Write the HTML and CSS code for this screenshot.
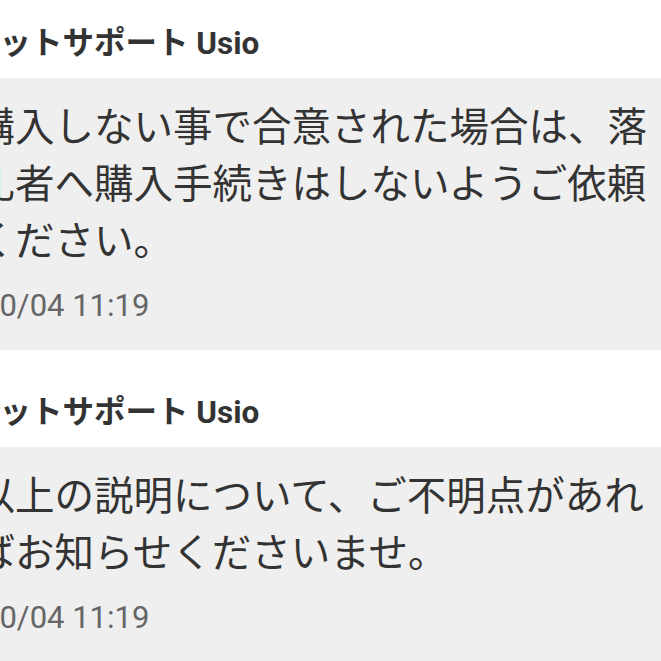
FILE: index.html
```html
<!DOCTYPE html>
<html lang="ja">
<head>
    <meta charset="UTF-8">
    <meta name="viewport" content="width=device-width, initial-scale=1.0">
    <title>ネットサポート Usio</title>
    <link rel="stylesheet" href="styles.css">
</head>
<body>
    <div class="chat">
        <div class="message">
            <div class="sender">ネットサポート Usio</div>
            <div class="bubble">
                <p class="text">購入しない事で合意された場合は、落札者へ購入手続きはしないようご依頼ください。</p>
                <div class="time">10/04 11:19</div>
            </div>
        </div>

        <div class="message">
            <div class="sender">ネットサポート Usio</div>
            <div class="bubble">
                <p class="text">以上の説明について、ご不明点があればお知らせくださいませ。</p>
                <div class="time">10/04 11:19</div>
            </div>
        </div>
    </div>
</body>
</html>
```

FILE: styles.css
```css
* {
    margin: 0;
    padding: 0;
    box-sizing: border-box;
}

body {
    font-family: Roboto, "Noto Sans CJK JP", sans-serif;
    background: #fff;
    color: #333;
    overflow: hidden;
}

.chat {
    width: 720px;
    margin-left: -40px;
}

.message {
    margin-bottom: 19px;
}

.sender {
    padding: 28px 0 18px 8px;
    font-size: 31.5px;
    line-height: 32px;
    font-weight: bold;
    color: #333;
    white-space: nowrap;
}

.bubble {
    background: #efefef;
    padding: 17px 25px 24px 15.5px;
}

.text {
    font-family: "Noto Sans CJK JP", sans-serif;
    font-size: 39.5px;
    line-height: 57px;
    color: #333;
}

.time {
    margin-top: 20px;
    padding-left: 6.5px;
    font-size: 31px;
    line-height: 40px;
    color: #666;
}
```
